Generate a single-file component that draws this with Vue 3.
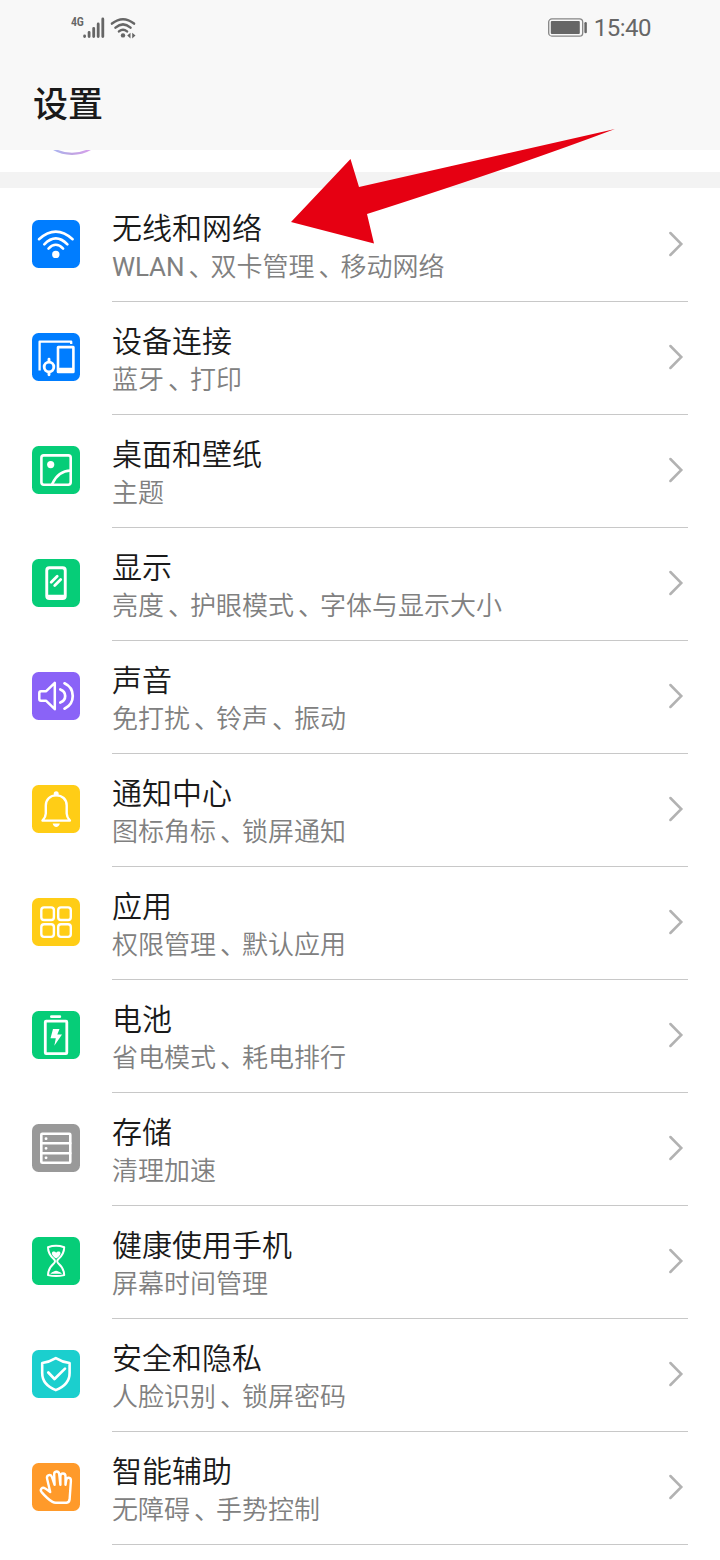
<script setup>
const items = [
  { icon: 'wifi', color: '#007dff', title: '无线和网络', detail: 'WLAN、双卡管理、移动网络' },
  { icon: 'devices', color: '#007dff', title: '设备连接', detail: '蓝牙、打印' },
  { icon: 'wallpaper', color: '#06cd78', title: '桌面和壁纸', detail: '主题' },
  { icon: 'display', color: '#06cd78', title: '显示', detail: '亮度、护眼模式、字体与显示大小' },
  { icon: 'sound', color: '#8a63f7', title: '声音', detail: '免打扰、铃声、振动' },
  { icon: 'bell', color: '#ffcd16', title: '通知中心', detail: '图标角标、锁屏通知' },
  { icon: 'apps', color: '#ffcd16', title: '应用', detail: '权限管理、默认应用' },
  { icon: 'battery', color: '#06cd78', title: '电池', detail: '省电模式、耗电排行' },
  { icon: 'storage', color: '#999999', title: '存储', detail: '清理加速' },
  { icon: 'hourglass', color: '#06cd78', title: '健康使用手机', detail: '屏幕时间管理' },
  { icon: 'shield', color: '#1bcfce', title: '安全和隐私', detail: '人脸识别、锁屏密码' },
  { icon: 'hand', color: '#ff9a2a', title: '智能辅助', detail: '无障碍、手势控制' },
]
const split = (s) => s.split(/(、)/)
</script>

<template>
  <div class="screen">
    <header class="header">
      <div class="status">
        <div class="signals">
          <span class="net">4G</span>
          <svg class="bars" width="22" height="22" viewBox="0 0 22 22" stroke="#666" stroke-width="2.8" stroke-linecap="round">
            <path d="M1.6 19V19.6M6.1 15.3V19.6M10.7 11.3V19.6M15.2 6.9V19.6M19.8 2V19.6" />
          </svg>
          <svg class="wlan" width="28" height="22" viewBox="0 0 28 22" fill="none" stroke="#666" stroke-width="2.5" stroke-linecap="round">
            <path d="M2 6.6Q13 -2.2 24 6.6M5.5 10.6Q13 4.2 20.5 10.6M9 14.4Q13 11 17 14.4" />
            <circle cx="13" cy="18.4" r="2.2" fill="#666" stroke="none" />
            <path d="M20.5 15.8V21.4L17.2 18.6ZM22.2 15.8V21.4L25.5 18.6Z" fill="#666" stroke="none" />
          </svg>
        </div>
        <div class="right">
          <svg width="40" height="20" viewBox="0 0 40 20" fill="none">
            <rect x=".7" y=".9" width="34" height="17.2" rx="3.2" stroke="#858585" stroke-width="1.3" />
            <rect x="2.8" y="3" width="29" height="13" rx="1" fill="#666" />
            <path d="M37.6 5.3V14" stroke="#666" stroke-width="2.5" stroke-linecap="round" />
          </svg>
          <time class="clock">15:40</time>
        </div>
      </div>
      <h1>设置</h1>
    </header>

    <div class="account">
      <svg width="60" height="6" viewBox="0 0 60 6" fill="none">
        <defs>
          <linearGradient id="ring" x1="10" y1="0" x2="52" y2="0" gradientUnits="userSpaceOnUse">
            <stop stop-color="#a9b8f4" /><stop offset=".5" stop-color="#bda5e2" /><stop offset="1" stop-color="#d9a0ee" />
          </linearGradient>
        </defs>
        <circle cx="32" cy="-33.6" r="37.4" stroke="url(#ring)" stroke-width="2.2" />
      </svg>
    </div>

    <main class="list">
      <section v-for="item in items" :key="item.icon" class="row">
        <svg class="icon" width="48" height="48" viewBox="0 0 48 48" fill="none" stroke="#fff" stroke-width="2.6" stroke-linecap="round" stroke-linejoin="round">
          <rect width="48" height="48" rx="6.5" :fill="item.color" stroke="none" />
          <g v-if="item.icon === 'wifi'">
            <path d="M7 19.2Q23.8 4 40.6 19.2M12.3 24.3Q23.8 12.4 35.4 24.3M16.5 28.6Q23.8 21 31.1 28.6" />
            <circle cx="23.8" cy="34.4" r="3.7" fill="#fff" stroke="none" />
          </g>
          <g v-else-if="item.icon === 'devices'">
            <path d="M7.6 37.5V8.7H39.2V11" stroke-width="2.3" stroke-linecap="butt" />
            <path fill="#fff" stroke="none" fill-rule="evenodd" d="M26.2 12.7H41.2a1.5 1.5 0 0 1 1.5 1.5V38.8a1.5 1.5 0 0 1-1.5 1.5H26.2a1.5 1.5 0 0 1-1.5-1.5V14.2a1.5 1.5 0 0 1 1.5-1.5ZM27.3 15.5V34.8H40.1V15.5Z" />
            <circle cx="17" cy="34" r="4.8" stroke-width="2.8" />
            <path d="M17 26.3V28.5M17 39.5V41.7" stroke-width="2.9" />
          </g>
          <g v-else-if="item.icon === 'wallpaper'">
            <rect x="9.4" y="9.4" width="29.3" height="29.3" rx="2.4" />
            <path d="M20.2 38Q26 25 38.7 24.5" />
            <circle cx="18.7" cy="18.6" r="3.6" fill="#fff" stroke="none" />
          </g>
          <g v-else-if="item.icon === 'display'">
            <path fill="#fff" stroke="none" fill-rule="evenodd" d="M17.3 7.3H30.7a4 4 0 0 1 4 4V37a4 4 0 0 1-4 4H17.3a4 4 0 0 1-4-4V11.3a4 4 0 0 1 4-4ZM17.7 10.2Q16.2 10.2 16.2 11.7V35.7H31.8V11.7Q31.8 10.2 30.3 10.2Z" />
            <path d="M19.2 23.2L25.2 17.2M22.7 26.5L28.7 20.5" stroke-width="2.8" />
          </g>
          <g v-else-if="item.icon === 'sound'" stroke-width="2.5">
            <path d="M9 19.2H14.2L22.8 10.8V37.2L14.2 28.8H9Q7.3 28.8 7.3 27.1V20.9Q7.3 19.2 9 19.2Z" />
            <path d="M28.3 17.5C34.8 20 34.8 28 28.3 30.5M32.5 11.3C43.5 16.5 43.5 31.5 32.5 36.7" stroke-width="2.7" />
          </g>
          <g v-else-if="item.icon === 'bell'">
            <path d="M10.5 35.6H37.9Q34.7 32 34.7 28.5V20.5C34.7 14 30 10.4 24.2 10.4S13.8 14 13.8 20.5V28.5Q13.8 32 10.5 35.6Z" stroke-width="2.4" />
            <circle cx="24.2" cy="8.7" r="2.5" fill="#fff" stroke="none" />
            <path d="M20.6 38.5H27.9Q26.8 41.9 24.2 41.9T20.6 38.5Z" fill="#fff" stroke="none" />
          </g>
          <g v-else-if="item.icon === 'apps'" stroke-width="2.4">
            <rect x="9.3" y="9.4" width="12.6" height="12.6" rx="2.8" />
            <rect x="26.2" y="9.4" width="12.6" height="12.6" rx="2.8" />
            <rect x="9.3" y="26.3" width="12.6" height="12.6" rx="2.8" />
            <rect x="26.2" y="26.3" width="12.6" height="12.6" rx="2.8" />
          </g>
          <g v-else-if="item.icon === 'battery'">
            <rect x="13.3" y="10.2" width="21.5" height="32.4" rx=".8" stroke-width="2.8" />
            <path d="M19.4 5.7H27.8" stroke-width="2.8" />
            <path d="M21 18H27.5L25.3 23.6H30L22.3 34.8L23.8 27.3H18.5Z" fill="#fff" stroke="none" />
          </g>
          <g v-else-if="item.icon === 'storage'">
            <rect x="9.3" y="9.7" width="29" height="29" rx="1" />
            <path d="M9.3 19.3H38.3M9.3 29.2H38.3" />
            <path d="M14 14.7H14.1M14 24.3H14.1M14 33.8H14.1" stroke-width="2.8" />
          </g>
          <g v-else-if="item.icon === 'hourglass'" stroke-width="2">
            <path d="M16 10.2Q24 7.4 32.2 10.2Q32.2 17 26.2 22.3Q24.2 24.3 26.2 26.2Q32.2 31.5 32.2 38.1Q24 40 16 38.1Q16 31.5 22 26.2Q24 24.3 22 22.3Q16 17 16 10.2Z" />
            <path d="M24.1 21.5C19.7 18.7 18.8 15.4 21 14.6Q23 13.9 24.1 15.7Q25.3 13.9 27.3 14.6C29.5 15.4 28.6 18.7 24.1 21.5ZM18.3 36.7Q20 35 21.8 34.5Q24 32.8 26.4 34.5Q28.3 35 30 36.7Z" fill="#fff" stroke="none" />
          </g>
          <g v-else-if="item.icon === 'shield'">
            <path d="M23.8 8.1Q30 12 37.6 13V23C37.6 32 31.8 37 23.8 40.1C15.8 37 10.2 32 10.2 23V13Q17.5 12 23.8 8.1Z" />
            <path d="M16.3 22.5L22.5 29L33 18.6" stroke-width="2.7" />
          </g>
          <g v-else stroke-width="2.4">
            <path d="M23.8 39.8H34.6Q37.2 39.3 37.6 36.5L38.9 18C39.2 14 34.6 13.7 34.2 17.2L33.5 21.8V13.2C33.5 9.6 28.6 9.6 28.4 13V21.8L27.2 11.2C26.8 7.3 21.9 7.8 22.2 11.6L22.6 21.8L20 14.2C18.8 10.6 14.2 12 15.1 15.7L18.2 29L13.2 25.4C10.2 23.5 7.5 26.4 9.6 29.1Q15.5 36 20.5 38.9Q22 39.8 23.8 39.8Z" />
          </g>
        </svg>
        <div class="content">
          <div class="text">
            <h2>{{ item.title }}</h2>
            <p><span v-for="(part, i) in split(item.detail)" :key="i" :class="{ comma: part === '、', latin: /^[A-Z]+$/.test(part) }">{{ part }}</span></p>
          </div>
          <svg class="chevron" width="18" height="28" viewBox="0 0 18 28" fill="none" stroke="#b2b2b2" stroke-width="2.5" stroke-linecap="round">
            <path d="M3.4 3L14.3 14L3.4 25" />
          </svg>
        </div>
      </section>
    </main>

    <svg class="pointer" width="330" height="120" viewBox="0 0 330 120">
      <path d="M1 97L60.5 34L69 62L325 4Q230 40 77 89L84 118.5Z" fill="#e60012" />
    </svg>
  </div>
</template>

<style>
body { background: #fff; }
</style>

<style scoped>
.screen {
  position: relative;
  width: 720px;
  height: 1560px;
  overflow: hidden;
  background: #fff;
  font-family: Roboto, "Noto Sans CJK SC", sans-serif;
}
.header { height: 150px; background: #f8f8f8; }
.status {
  display: flex;
  justify-content: space-between;
  align-items: center;
  height: 56px;
  padding: 0 69px 0 71px;
}
.signals, .right { display: flex; align-items: center; }
.net {
  width: 12px;
  height: 26px;
  font-family: "Roboto Condensed", Roboto, sans-serif;
  font-size: 12px;
  font-weight: 600;
  line-height: 14px;
  letter-spacing: -0.4px;
  color: #666;
}
.bars { margin-top: -1px; }
.wlan { margin: -1px 0 0 5px; }
.clock { margin-left: 6px; font-size: 24px; line-height: 28px; letter-spacing: -0.5px; color: #666; }
h1, h2, p { margin: 0; }
h1 {
  padding-left: 33px;
  font-size: 35px;
  font-weight: 500;
  line-height: 48px;
  margin-top: 26px;
  color: #1a1a1a;
}
.account { height: 22px; padding-left: 40px; border-bottom: 16px solid #f3f3f3; }
.account svg { display: block; }
.row { display: flex; height: 113px; padding: 0 32px; }
.icon { margin-top: 32px; flex: none; }
.content {
  display: flex;
  justify-content: space-between;
  flex: 1;
  box-sizing: border-box;
  height: 114px;
  margin-left: 32px;
  border-bottom: 1px solid #c8c8c8;
}
.text { padding-top: 22px; }
h2 { font-size: 30px; font-weight: 350; line-height: 38px; color: #1a1a1a; white-space: nowrap; }
p { font-size: 26px; font-weight: 350; line-height: 38px; color: #808080; white-space: nowrap; }
.latin { font-weight: 400; letter-spacing: -0.1px; }
.comma { display: inline-block; box-sizing: border-box; width: 26px; padding-left: 4px; font-feature-settings: "halt"; }
.chevron { margin: 42px 3px 0 0; }
.pointer { position: absolute; left: 290px; top: 125px; }
</style>
